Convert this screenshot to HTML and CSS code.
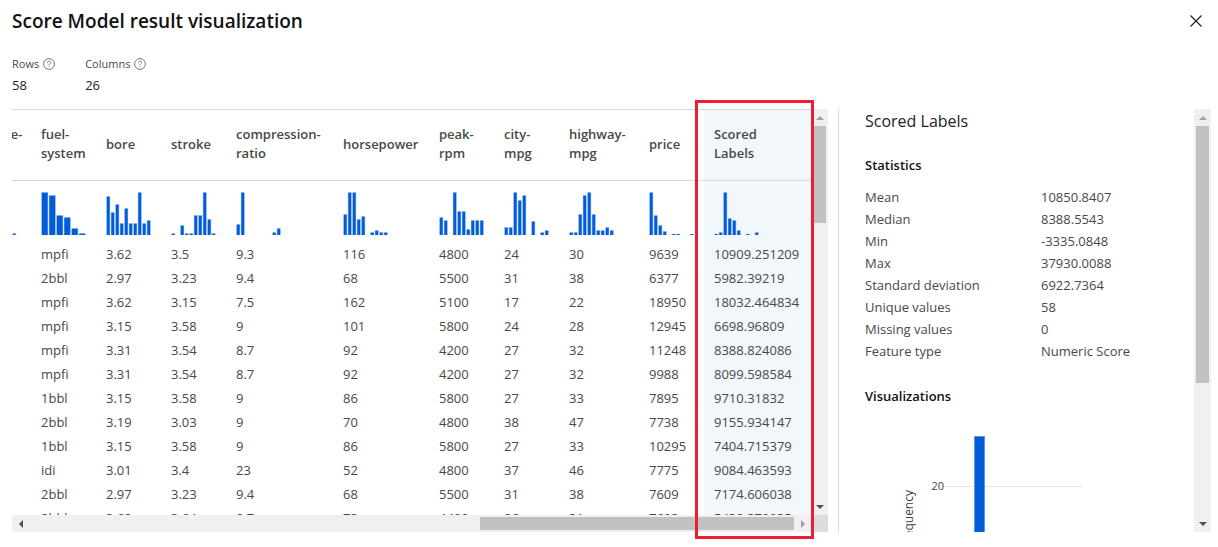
FILE: index.html
```html
<!DOCTYPE html>
<html lang="en">
<head>
<meta charset="utf-8">
<title>Score Model result visualization</title>
<link rel="stylesheet" href="styles.css">
</head>
<body>
<main class="dialog">
  <header class="dialog-header">
    <h1 class="dialog-title">Score Model result visualization</h1>
    <button class="close" type="button" aria-label="Close">
      <svg width="12" height="12" viewBox="0 0 12 12"><path d="M.5 .5l11 11M11.5 .5l-11 11" fill="none" stroke="#222" stroke-width="1.2"/></svg>
    </button>
  </header>
  <dl class="summary">
    <div>
      <dt>Rows <svg class="help" width="12" height="12" viewBox="0 0 12 12"><circle cx="6" cy="6" r="5.4"/><path d="M4.4 4.7c0-2.1 3.2-2.1 3.2-.1 0 1.2-1.6 1.2-1.6 2.6M6 8.2v1"/></svg></dt>
      <dd>58</dd>
    </div>
    <div>
      <dt>Columns <svg class="help" width="12" height="12" viewBox="0 0 12 12"><circle cx="6" cy="6" r="5.4"/><path d="M4.4 4.7c0-2.1 3.2-2.1 3.2-.1 0 1.2-1.6 1.2-1.6 2.6M6 8.2v1"/></svg></dt>
      <dd>26</dd>
    </div>
  </dl>
  <div class="content">
    <section class="grid-pane">
      <div class="grid-view">
        <table class="grid">
          <colgroup><col class="w-s"><col class="w-s"><col class="w-s"><col class="w-s"><col class="w-l"><col class="w-m"><col class="w-s"><col class="w-s"><col class="w-p"><col class="w-s"><col class="w-l scored"></colgroup>
          <thead>
            <tr><th>engine-<br>size</th><th>fuel-<br>system</th><th>bore</th><th>stroke</th><th>compression-<br>ratio</th><th>horsepower</th><th>peak-<br>rpm</th><th>city-<br>mpg</th><th>highway-<br>mpg</th><th>price</th><th>Scored<br>Labels</th></tr>
          </thead>
          <tbody>
            <tr class="charts">
              <td data-bars="20,42,30,16,8,4,0,0,2,0"></td>
              <td data-bars="43,40,20,18,7,2"></td>
              <td data-bars="39,23,31,12,27,12,12,43,12,15"></td>
              <td data-bars="2,0,10,2,2,20,20,43,16,2"></td>
              <td data-bars="11,43,0,0,0,0,0,0,3,7"></td>
              <td data-bars="21,43,43,16,19,0,3,5,3,3"></td>
              <td data-bars="18,15,0,43,24,24,6,15,15,15"></td>
              <td data-bars="8,8,43,35,40,0,14,0,3,5"></td>
              <td data-bars="3,3,21,40,43,21,5,5,8,5"></td>
              <td data-bars="43,20,10,4,0,1,1,0,0,1"></td>
              <td data-bars="1,3,43,17,15,5,0,1,0,3"></td>
            </tr>
            <tr><td></td><td>mpfi</td><td>3.62</td><td>3.5</td><td>9.3</td><td>116</td><td>4800</td><td>24</td><td>30</td><td>9639</td><td>10909.251209</td></tr>
            <tr><td></td><td>2bbl</td><td>2.97</td><td>3.23</td><td>9.4</td><td>68</td><td>5500</td><td>31</td><td>38</td><td>6377</td><td>5982.39219</td></tr>
            <tr><td></td><td>mpfi</td><td>3.62</td><td>3.15</td><td>7.5</td><td>162</td><td>5100</td><td>17</td><td>22</td><td>18950</td><td>18032.464834</td></tr>
            <tr><td></td><td>mpfi</td><td>3.15</td><td>3.58</td><td>9</td><td>101</td><td>5800</td><td>24</td><td>28</td><td>12945</td><td>6698.96809</td></tr>
            <tr><td></td><td>mpfi</td><td>3.31</td><td>3.54</td><td>8.7</td><td>92</td><td>4200</td><td>27</td><td>32</td><td>11248</td><td>8388.824086</td></tr>
            <tr><td></td><td>mpfi</td><td>3.31</td><td>3.54</td><td>8.7</td><td>92</td><td>4200</td><td>27</td><td>32</td><td>9988</td><td>8099.598584</td></tr>
            <tr><td></td><td>1bbl</td><td>3.15</td><td>3.58</td><td>9</td><td>86</td><td>5800</td><td>27</td><td>33</td><td>7895</td><td>9710.31832</td></tr>
            <tr><td></td><td>2bbl</td><td>3.19</td><td>3.03</td><td>9</td><td>70</td><td>4800</td><td>38</td><td>47</td><td>7738</td><td>9155.934147</td></tr>
            <tr><td></td><td>1bbl</td><td>3.15</td><td>3.58</td><td>9</td><td>86</td><td>5800</td><td>27</td><td>33</td><td>10295</td><td>7404.715379</td></tr>
            <tr><td></td><td>idi</td><td>3.01</td><td>3.4</td><td>23</td><td>52</td><td>4800</td><td>37</td><td>46</td><td>7775</td><td>9084.463593</td></tr>
            <tr><td></td><td>2bbl</td><td>2.97</td><td>3.23</td><td>9.4</td><td>68</td><td>5500</td><td>31</td><td>38</td><td>7609</td><td>7174.606038</td></tr>
            <tr><td></td><td>2bbl</td><td>3.62</td><td>3.64</td><td>8.7</td><td>73</td><td>4400</td><td>26</td><td>31</td><td>7603</td><td>5438.370035</td></tr>
          </tbody>
        </table>
      </div>
      <div class="vbar" aria-hidden="true"><i class="arrow up"></i><div class="track"><div class="thumb rows-thumb"></div></div><i class="arrow down"></i></div>
      <div class="hbar" aria-hidden="true"><i class="arrow left"></i><div class="track"><div class="thumb cols-thumb"></div></div><i class="arrow right"></i></div>
      <div class="corner"></div>
      <div class="highlight"></div>
    </section>
    <aside class="details">
      <div class="details-view">
        <h2 class="details-title">Scored Labels</h2>
        <h3 class="details-heading">Statistics</h3>
        <dl class="stats">
          <dt>Mean</dt><dd>10850.8407</dd>
          <dt>Median</dt><dd>8388.5543</dd>
          <dt>Min</dt><dd>-3335.0848</dd>
          <dt>Max</dt><dd>37930.0088</dd>
          <dt>Standard deviation</dt><dd>6922.7364</dd>
          <dt>Unique values</dt><dd>58</dd>
          <dt>Missing values</dt><dd>0</dd>
          <dt>Feature type</dt><dd>Numeric Score</dd>
        </dl>
        <h3 class="details-heading">Visualizations</h3>
        <svg class="chart" width="240" height="180" viewBox="0 0 240 180">
          <path d="M79 78.500H218" stroke="#e6e6e6"/>
          <rect x="109.500" y="28.500" width="10" height="160" fill="#015cda" stroke="#5c98e8"/>
          <text x="79" y="82" text-anchor="end" font-size="11">20</text>
          <text transform="translate(48 82) rotate(-90)" text-anchor="end" font-size="12">Frequency</text>
        </svg>
      </div>
      <div class="vbar" aria-hidden="true"><i class="arrow up"></i><div class="track"><div class="thumb details-thumb"></div></div><i class="arrow down"></i></div>
    </aside>
  </div>
</main>
<script src="charts.js"></script>
</body>
</html>
```
FILE: styles.css
```css
* { box-sizing: border-box; }
body {
  margin: 0;
  background: #fff;
  color: #484848;
  font-family: "Open Sans", "Noto Sans", sans-serif;
  font-size: 13px;
  line-height: 24px;
}
h1, h2, h3, dl, dd { margin: 0; }
.dialog {
  display: flex;
  flex-direction: column;
  height: 100vh;
  padding: 7px 7px 15px 12px;
  overflow: hidden;
}
.dialog-header {
  display: flex;
  justify-content: space-between;
  align-items: center;
  height: 28px;
}
.dialog-title {
  color: #111;
  font-size: 19px;
  font-weight: 600;
  line-height: 28px;
}
.close {
  display: flex;
  padding: 9px;
  border: 0;
  background: none;
}
.summary {
  display: flex;
  gap: 30px;
  height: 74px;
  padding-top: 19px;
}
.summary dt {
  display: flex;
  align-items: center;
  gap: 4px;
  font-size: 11px;
  line-height: 20px;
}
.summary dd { color: #222; line-height: 22px; }
.help { fill: none; stroke: #777; stroke-width: 1; }
.content {
  display: flex;
  flex: 1;
  gap: 10px;
  min-height: 0;
}
.grid-pane {
  position: relative;
  display: grid;
  flex: 816;
  grid-template-columns: minmax(0, 1fr) 17px;
  grid-template-rows: minmax(0, 1fr) 17px;
  min-width: 0;
}
.grid-view {
  display: flex;
  justify-content: flex-end;
  overflow: hidden;
}
.grid {
  flex: none;
  width: 845px;
  height: max-content;
  table-layout: fixed;
  border-collapse: separate;
  border-spacing: 0;
}
.w-s { width: 65px; }
.w-m { width: 96px; }
.w-l { width: 107px; }
.w-p { width: 80px; }
.scored { background: #f2f7fc; }
.grid th {
  height: 72px;
  padding: 0 0 2px 10px;
  border: solid #d8d8d8;
  border-width: 1px 0;
  text-align: left;
  font-weight: 600;
  line-height: 19px;
}
.grid td {
  height: 24px;
  padding: 0 0 0 10px;
  white-space: nowrap;
}
.grid .charts td {
  height: 61px;
  padding-top: 11px;
  vertical-align: top;
}
.grid svg { display: block; }
.vbar, .hbar { display: flex; background: #f0f0f0; }
.vbar { flex-direction: column; width: 17px; }
.hbar { height: 17px; }
.track { display: flex; flex: 1; min-height: 0; min-width: 0; }
.vbar .track { flex-direction: column; padding: 0 2px; }
.hbar .track { padding: 2px 0; }
.thumb { background: #c1c1c1; }
.rows-thumb { height: 26%; }
.cols-thumb { width: 41%; margin-left: auto; }
.details-thumb { height: 66%; }
.arrow { display: flex; flex: none; align-items: center; justify-content: center; width: 17px; height: 17px; }
.arrow::before { content: ""; border: 4px solid transparent; }
.up::before { border-top: 0; border-bottom-color: #a0a0a0; }
.down::before { border-bottom: 0; border-top-color: #505050; }
.left::before { border-left: 0; border-right-color: #505050; }
.right::before { border-right: 0; border-left-color: #a0a0a0; }
.corner { background: #dcdcdc; }
.highlight {
  position: absolute;
  top: -9px;
  right: 14px;
  bottom: -7px;
  width: 119px;
  border: 3px solid #ee1c36;
}
.details {
  display: flex;
  flex: 372;
  min-width: 0;
  border-left: 1px solid #d8d8d8;
}
.details-view { flex: 1; min-width: 0; padding-left: 26px; overflow: hidden; }
.details-title {
  color: #222;
  font-size: 16px;
  font-weight: 400;
  line-height: 24px;
}
.details-heading { color: #111; font-size: 13px; font-weight: 600; margin-top: 20px; }
.stats {
  display: grid;
  grid-template-columns: 176px 1fr;
  padding: 9px 0 2px;
  line-height: 22px;
}
.chart { display: block; fill: #444; }
```
FILE: charts.js
```js
const NS = "http://www.w3.org/2000/svg";

function addRect(svg, x, width, height, fill) {
  const rect = document.createElementNS(NS, "rect");
  rect.setAttribute("x", x);
  rect.setAttribute("y", 43 - height);
  rect.setAttribute("width", width);
  rect.setAttribute("height", height);
  rect.setAttribute("fill", fill);
  svg.appendChild(rect);
}

document.querySelectorAll("[data-bars]").forEach((cell) => {
  const bars = cell.dataset.bars.split(",").map(Number);
  const step = 45 / bars.length;
  const svg = document.createElementNS(NS, "svg");
  svg.setAttribute("width", 46);
  svg.setAttribute("height", 43);
  bars.forEach((height, i) => {
    if (!height) return;
    const left = i * step;
    addRect(svg, left + 0.25, step - 0.5, height, "#b4cff4");
    addRect(svg, left + 0.8, step - 1.6, Math.max(height - 0.7, 1), "#015cda");
  });
  cell.appendChild(svg);
});
```
